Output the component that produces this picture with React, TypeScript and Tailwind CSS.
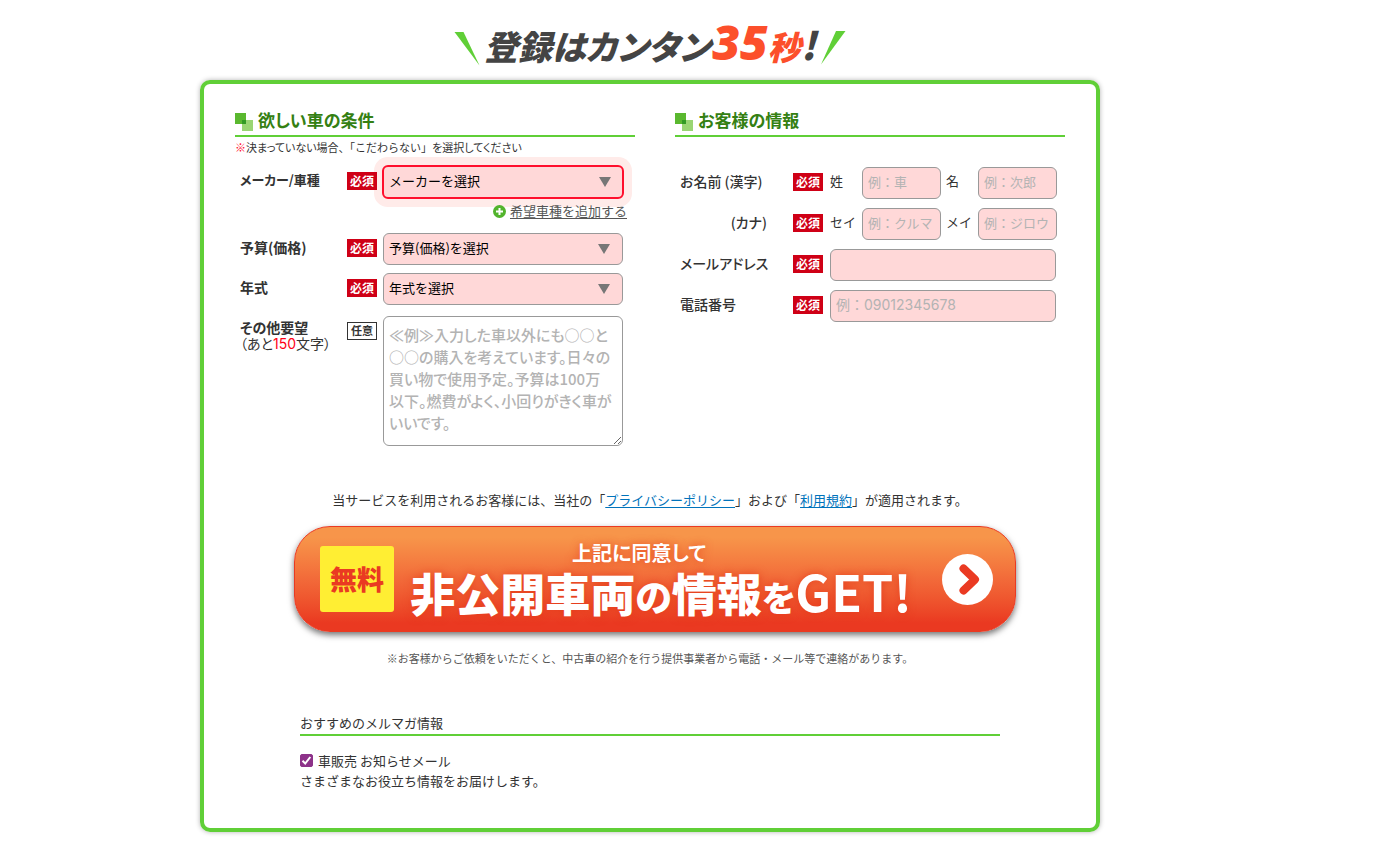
import React from "react";

const palt = "[font-feature-settings:'palt']";
const field =
  "block h-8 rounded-md border border-[#999] bg-[#ffd8d8] px-[5px] pb-1 text-black placeholder:text-[#b3b3b3] outline-none";

function Heading({ children }: { children: React.ReactNode }) {
  return (
    <h2
      className={`flex h-[27px] items-center border-b-2 border-[#60cf37] pb-1.5 text-[17px] leading-none font-bold text-[#348012] ${palt}`}
    >
      <svg className="mt-1 mr-[5px]" width="18" height="18" viewBox="0 0 18 18" aria-hidden="true">
        <rect width="11" height="11" fill="#5ab82f" />
        <rect x="7" y="7" width="11" height="11" fill="#9ad573" />
        <rect x="7" y="7" width="4" height="4" fill="#329a24" />
      </svg>
      {children}
    </h2>
  );
}

function Required() {
  return (
    <span className="relative z-10 mb-0.5 flex h-[18px] w-[30px] shrink-0 items-center justify-center bg-[#cf0016] pb-px text-[12px] leading-none font-bold text-white">
      必須
    </span>
  );
}

function Dropdown({ id, text, active }: { id: string; text: string; active?: boolean }) {
  return (
    <div className={active ? "relative ml-[5px] w-[242px]" : "relative mx-[6px] w-[240px]"}>
      <select
        id={id}
        className={
          active
            ? "block h-[34px] w-full appearance-none rounded-md border-2 border-[#ff0f2d] bg-[#ffd8d8] px-[5px] pb-0.5 text-[13px] text-black shadow-[0_0_0_8px_#ffebe9] outline-none"
            : "block h-8 w-full appearance-none rounded-md border border-[#999] bg-[#ffd8d8] px-[5px] pb-0.5 text-[13px] text-black outline-none"
        }
      >
        <option>{text}</option>
      </select>
      <svg
        className="pointer-events-none absolute top-1/2 right-[13px] -mt-[5px]"
        width="12"
        height="10"
        viewBox="0 0 12 10"
        aria-hidden="true"
      >
        <path d="M0 0h12L6 10z" fill="#777" />
      </svg>
    </div>
  );
}

function SelectRow({ id, label, text, active }: { id: string; label: string; text: string; active?: boolean }) {
  return (
    <div className="flex items-center">
      <label
        htmlFor={id}
        className={`w-28 shrink-0 pb-1 pl-[5px] leading-5 font-bold ${active ? "text-[13px]" : "text-[14px]"} ${palt}`}
      >
        {label}
      </label>
      <Required />
      <Dropdown id={id} text={text} active={active} />
    </div>
  );
}

function NameField({ id, label, placeholder }: { id: string; label: string; placeholder: string }) {
  return (
    <div className="flex items-center">
      <label htmlFor={id} className="w-8 shrink-0 pb-1 text-[13px]">
        {label}
      </label>
      <input id={id} type="text" placeholder={placeholder} className={`${field} w-[79px] text-[13px]`} />
    </div>
  );
}

const rowLabel = `w-[118px] shrink-0 pb-1 pl-[5px] text-[14px] leading-5 font-medium ${palt}`;

export default function App() {
  return (
    <main className="bg-white pr-[78px] pb-8 font-['Noto_Sans_CJK_JP',sans-serif] text-[13px] text-[#333]">
      <div className="mx-auto max-w-[900px]">
        <h1
          className={`flex h-20 items-center justify-center leading-none font-black text-[#444] italic ${palt}`}
        >
          <svg className="mt-4 mr-1" width="26" height="36" viewBox="0 0 26 36" aria-hidden="true">
            <path d="M0.500 2h9l16 33.500z" fill="#60cf37" />
          </svg>
          <span className="flex items-baseline pt-1 text-[34px] whitespace-nowrap">
            登録はカンタン
            <span className="ml-0.5 font-['Noto_Sans',sans-serif] text-[48px] text-[#fc4f2b]">35</span>
            <span className="text-[33px] text-[#fc4f2b]">秒</span>
            <span className="text-[38px]">!</span>
          </span>
          <svg className="mt-4 ml-1" width="26" height="36" viewBox="0 0 26 36" aria-hidden="true">
            <path d="M16 1h9.500L1 34.500z" fill="#60cf37" />
          </svg>
        </h1>

        <form
          className="rounded-[10px] border-4 border-[#60cf37] pt-[26px] pb-[37px] shadow-[0_0_5px_rgba(0,0,0,0.3)]"
          onSubmit={(e) => e.preventDefault()}
        >
          <div className="flex gap-10 px-[31px]">
            <section className="w-[400px]">
              <Heading>欲しい車の条件</Heading>
              <p className="mb-2 text-[11px] leading-5 whitespace-nowrap">
                <span className="text-[#ff0f2d]">※</span>
                <span className={palt}>決まっていない場合</span>、「こだわらない」
                <span className={palt}>を選択してください</span>
              </p>
              <SelectRow id="maker" label="メーカー/車種" text="メーカーを選択" active />
              <div className="relative z-10 mt-0.5 mb-3 flex h-5 items-center justify-end pr-2">
                <a href="#add" className="flex items-center gap-1 text-[#555]">
                  <svg width="13" height="13" viewBox="0 0 13 13" aria-hidden="true">
                    <circle cx="6.5" cy="6.5" r="6.5" fill="#52b42d" />
                    <path d="M6.500 3v7M3 6.500h7" stroke="#fff" strokeWidth="2" />
                  </svg>
                  <span className="underline underline-offset-2">希望車種を追加する</span>
                </a>
              </div>
              <div className="flex flex-col gap-2">
                <SelectRow id="budget" label="予算(価格)" text="予算(価格)を選択" />
                <SelectRow id="year" label="年式" text="年式を選択" />
              </div>
              <div className="mt-[11px] flex items-start">
                <label htmlFor="request" className={`w-28 shrink-0 pt-[3px] pl-[5px] text-[14px] leading-4 ${palt}`}>
                  <span className="block font-bold">その他要望</span>
                  <span className="block">
                    （あと<span className="font-['Inter','Noto_Sans_CJK_JP',sans-serif] text-[#ff0016]">150</span>文字）
                  </span>
                </label>
                <span className="mt-1.5 flex h-[18px] w-[30px] shrink-0 items-center justify-center border border-[#333] pb-px text-[11px] leading-none font-bold">
                  任意
                </span>
                <textarea
                  id="request"
                  placeholder={
                    "≪例≫入力した車以外にも○○と\n○○の購入を考えています。日々の\n買い物で使用予定。予算は100万\n以下。燃費がよく、小回りがきく車が\nいいです。"
                  }
                  className={`mx-[6px] block h-[130px] w-[240px] rounded-md border border-[#999] px-[5px] py-[7px] text-[15px] leading-[22px] font-medium outline-none placeholder:text-[#b3b3b3] ${palt}`}
                />
              </div>
            </section>

            <section className="w-[390px]">
              <Heading>お客様の情報</Heading>
              <div className="mt-[30px] flex flex-col gap-[9px]">
                <div className="flex items-center">
                  <span className={rowLabel}>お名前 (漢字)</span>
                  <Required />
                  <div className="ml-[7px] flex items-center gap-[5px]">
                    <NameField id="sei" label="姓" placeholder="例：車" />
                    <NameField id="mei" label="名" placeholder="例：次郎" />
                  </div>
                </div>
                <div className="flex items-center">
                  <span className={`${rowLabel} pr-[26px] text-right`}>(カナ)</span>
                  <Required />
                  <div className="ml-[7px] flex items-center gap-[5px]">
                    <NameField id="sei-kana" label="セイ" placeholder="例：クルマ" />
                    <NameField id="mei-kana" label="メイ" placeholder="例：ジロウ" />
                  </div>
                </div>
                <div className="flex items-center">
                  <label htmlFor="email" className={rowLabel}>
                    メールアドレス
                  </label>
                  <Required />
                  <input id="email" type="email" className={`${field} ml-[7px] w-[226px] text-[13px]`} />
                </div>
                <div className="flex items-center">
                  <label htmlFor="tel" className={rowLabel}>
                    電話番号
                  </label>
                  <Required />
                  <input
                    id="tel"
                    type="tel"
                    placeholder="例：09012345678"
                    className={`${field} ml-[7px] w-[226px] font-['Inter','Noto_Sans_CJK_JP',sans-serif] text-[14px]`}
                  />
                </div>
              </div>
            </section>
          </div>

          <p className="mt-11 text-center leading-5">
            当サービスを利用されるお客様には、当社の「
            <a href="#privacy" className="text-[#0073bb] underline underline-offset-2">
              プライバシーポリシー
            </a>
            」および「
            <a href="#terms" className="text-[#0073bb] underline underline-offset-2">
              利用規約
            </a>
            」が適用されます。
          </p>

          <div className="mt-4 flex justify-center pl-2.5">
            <button
              type="submit"
              className="flex h-[106px] w-[722px] items-center rounded-[36px] border border-[#ea3a22] bg-linear-to-b from-[#f7954a] from-10% via-[#f26a39] via-50% to-[#ea3921] to-92% pl-[25px] text-white shadow-[0_3px_6px_rgba(0,0,0,0.55)]"
            >
              <span className="flex h-[66px] w-[74px] items-center justify-center rounded-[3px] bg-[#ffee33] pb-0.5 text-[27px] leading-none font-black text-[#ea3a22]">
                無料
              </span>
              <span className="ml-4 flex w-[502px] flex-col items-center whitespace-nowrap [text-shadow:0_0_8px_rgba(225,50,20,0.7)]">
                <span className={`pt-1 pr-11 text-[20px] leading-6 font-bold ${palt}`}>上記に同意して</span>
                <span className={`flex items-baseline text-[45px] leading-[50px] font-black ${palt}`}>
                  非公開車両
                  <span className="text-[37px]">の</span>
                  情報
                  <span className="text-[35px]">を</span>
                  <span className="text-[50px] font-bold">GET!</span>
                </span>
              </span>
              <svg className="ml-[30px]" width="51" height="51" viewBox="0 0 51 51" aria-hidden="true">
                <circle cx="25.500" cy="25.500" r="25.500" fill="#fff" />
                <path
                  d="M21.500 14.500L33 25.500L21.500 36.500"
                  fill="none"
                  stroke="#ea3a22"
                  strokeWidth="8"
                  strokeLinecap="round"
                  strokeLinejoin="round"
                />
              </svg>
            </button>
          </div>

          <p className="mt-[18px] text-center text-[11px] leading-4 text-[#555]">
            ※お客様からご依頼をいただくと、中古車の紹介を行う提供事業者から電話・メール等で連絡があります。
          </p>

          <section className="mx-auto mt-[47px] w-[700px]">
            <h3 className="border-b-2 border-[#60cf37] pb-px leading-5">おすすめのメルマガ情報</h3>
            <label className="mt-[15px] flex items-center gap-[5px] leading-5">
              <span className="relative mb-0.5 size-[13px]">
                <input
                  type="checkbox"
                  defaultChecked
                  className="peer block size-[13px] appearance-none rounded-[2px] border border-[#8d3289] checked:bg-[#8d3289]"
                />
                <svg
                  className="pointer-events-none absolute inset-0 hidden peer-checked:block"
                  width="13"
                  height="13"
                  viewBox="0 0 13 13"
                  aria-hidden="true"
                >
                  <path d="M2.500 6.800L5.200 9.500L10.300 3" fill="none" stroke="#fff" strokeWidth="2" />
                </svg>
              </span>
              車販売 お知らせメール
            </label>
            <p className="leading-5">さまざまなお役立ち情報をお届けします。</p>
          </section>
        </form>
      </div>
    </main>
  );
}
